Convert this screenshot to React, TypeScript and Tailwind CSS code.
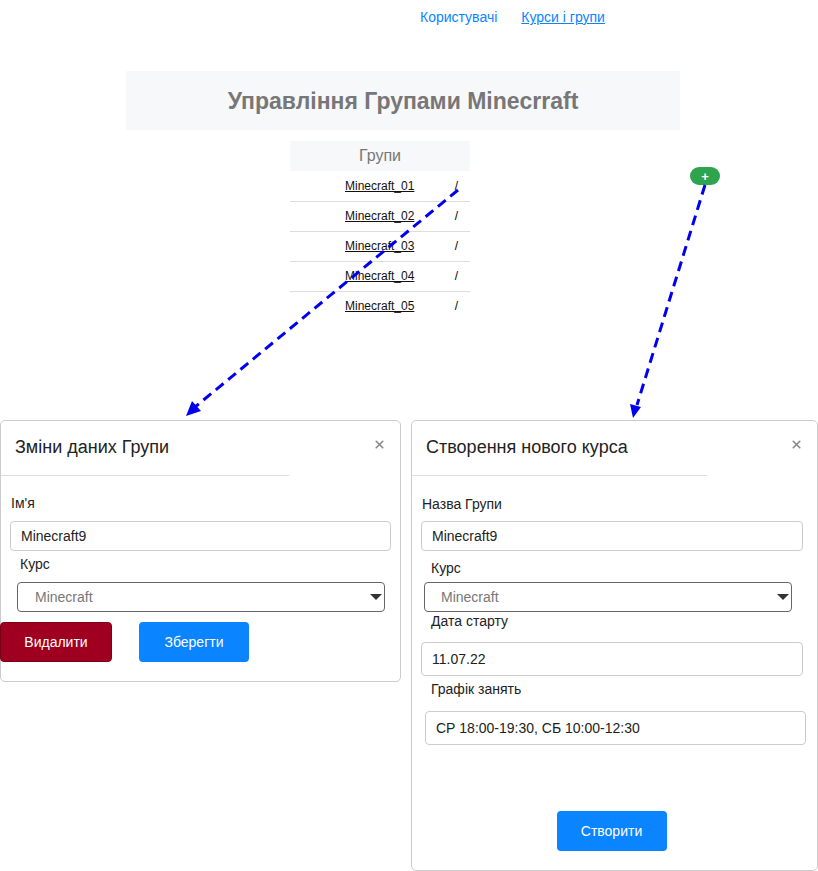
import { X } from 'lucide-react'

const groups = ['Minecraft_01', 'Minecraft_02', 'Minecraft_03', 'Minecraft_04', 'Minecraft_05']

function Caret() {
  return <span className="absolute right-[2px] top-[11px] w-0 h-0 border-l-[6px] border-r-[6px] border-t-[6px] border-l-transparent border-r-transparent border-t-[#333]" />
}

function Select({ className }: { className: string }) {
  return (
    <div className={`relative h-[30px] border border-[#666] rounded-[4px] text-[14px] text-[#777] flex items-center ${className}`}>
      Minecraft
      <Caret />
    </div>
  )
}

function Input({ value, className }: { value: string; className: string }) {
  return (
    <div className={`border border-[#ccc] rounded-[4px] text-[14px] text-[#222] flex items-center px-[10px] ${className}`}>{value}</div>
  )
}

function ModalHead({ title, line }: { title: string; line: string }) {
  return (
    <div className="relative h-[55px]">
      <div className="pt-[14px] pl-[14px] text-[18px] leading-[24px] text-[#222]">{title}</div>
      <span className="absolute right-[14px] top-[17px] text-[#888]"><X size={13} strokeWidth={3} /></span>
      <div className={`absolute left-0 bottom-0 h-px bg-[#ddd] ${line}`} />
    </div>
  )
}

export default function App() {
  return (
    <div className="relative w-[818px] h-[871px] bg-white font-['Liberation_Sans',Arial,sans-serif] overflow-hidden">
      <nav className="flex gap-[24px] pl-[420px] pt-[7px] text-[14px] leading-[20px] text-[#0a84ff]">
        <a>Користувачі</a>
        <a className="underline">Курси і групи</a>
      </nav>

      <div className="ml-[126px] mt-[44px] w-[554px] h-[59px] bg-[#f7f8fa] flex items-center justify-center">
        <h1 className="text-[23px] leading-[28px] font-bold text-[#777]">Управління Групами Minecrraft</h1>
      </div>

      <div className="relative">
        <table className="ml-[290px] mt-[11px] w-[180px] border-collapse text-[12px]">
          <thead>
            <tr><th colSpan={2} className="h-[30px] bg-[#f7f8fa] text-[16px] font-normal text-[#777]">Групи</th></tr>
          </thead>
          <tbody>
            {groups.map((g, i) => (
              <tr key={g} className={`h-[30px] ${i < 4 ? 'border-b border-[#ddd]' : ''}`}>
                <td className="pl-[55px] text-[#111] underline">{g}</td>
                <td className="pr-[12px] text-right">/</td>
              </tr>
            ))}
          </tbody>
        </table>
        <span className="absolute left-[690px] top-[26px] w-[30px] h-[18px] rounded-full bg-[#2ea44f] flex items-center justify-center text-white text-[13px] font-bold leading-none">+</span>
      </div>

      <div className="flex gap-[10px] mt-[99px] items-start">
        <div className="w-[401px] h-[262px] border border-[#ccc] rounded-[5px]">
          <ModalHead title="Зміни даних Групи" line="w-[288px]" />
          <div className="pt-[17px] pl-[10px] text-[14px] leading-[20px] text-[#222]">Ім'я</div>
          <Input value="Minecraft9" className="mt-[8px] ml-[9px] w-[381px] h-[30px]" />
          <div className="pt-[3px] pl-[19px] text-[14px] leading-[20px] text-[#222]">Курс</div>
          <Select className="mt-[8px] ml-[16px] w-[368px] pl-[17px]" />
          <div className="flex gap-[27px] mt-[10px] -ml-[1px]">
            <button className="w-[112px] h-[40px] bg-[#a0001f] border border-[#7a0018] rounded-[4px] text-white text-[14px]">Видалити</button>
            <button className="w-[110px] h-[40px] bg-[#0a84ff] rounded-[4px] text-white text-[14px]">Зберегти</button>
          </div>
        </div>

        <div className="w-[407px] h-[451px] border border-[#ccc] rounded-[5px]">
          <ModalHead title="Створення нового курса" line="w-[295px]" />
          <div className="pt-[18px] pl-[10px] text-[14px] leading-[20px] text-[#222]">Назва Групи</div>
          <Input value="Minecraft9" className="mt-[7px] ml-[9px] w-[382px] h-[30px]" />
          <div className="pt-[7px] pl-[19px] text-[14px] leading-[20px] text-[#222]">Курс</div>
          <Select className="mt-[4px] ml-[12px] w-[368px] pl-[16px]" />
          <div className="pl-[19px] text-[14px] leading-[18px] text-[#222]">Дата старту</div>
          <Input value="11.07.22" className="mt-[12px] ml-[9px] w-[382px] h-[34px]" />
          <div className="pt-[3px] pl-[19px] text-[14px] leading-[20px] text-[#222]">Графік занять</div>
          <Input value="СР 18:00-19:30, СБ 10:00-12:30" className="mt-[12px] ml-[13px] w-[381px] h-[34px]" />
          <div className="flex justify-center mt-[66px] pr-[6px]">
            <button className="w-[110px] h-[40px] bg-[#0a84ff] rounded-[4px] text-white text-[14px]">Створити</button>
          </div>
        </div>
      </div>

      <svg className="absolute inset-0 pointer-events-none" width="818" height="871">
        <g stroke="#0000ee" strokeWidth="3" strokeDasharray="10 6" fill="none">
          <line x1="458" y1="190" x2="195" y2="407" />
          <line x1="705" y1="185" x2="637" y2="405" />
        </g>
        <polygon points="186,416 192,401 201,411" fill="#0000ee" />
        <polygon points="633,418 630,404 641,407" fill="#0000ee" />
      </svg>
    </div>
  )
}
